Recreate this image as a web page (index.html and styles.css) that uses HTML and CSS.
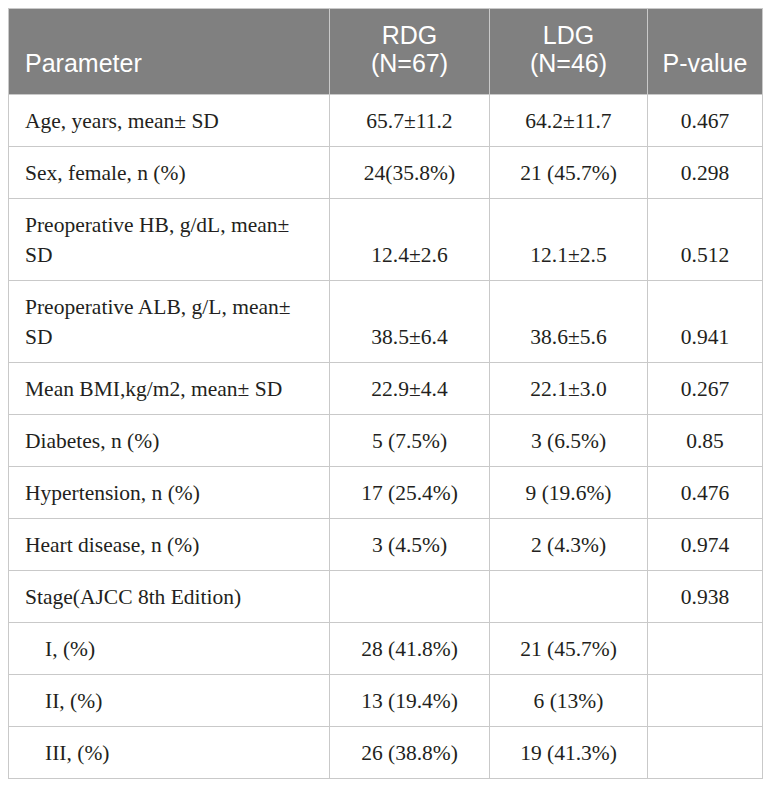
FILE: index.html
```html
<!DOCTYPE html>
<html lang="en">
<head>
    <meta charset="UTF-8">
    <meta name="viewport" content="width=device-width, initial-scale=1.0">
    <title>Baseline characteristics</title>
    <link rel="stylesheet" href="styles.css">
</head>
<body>
    <table class="data-table">
        <colgroup>
            <col class="col-param">
            <col class="col-rdg">
            <col class="col-ldg">
            <col class="col-p">
        </colgroup>
        <thead>
            <tr>
                <th class="param">Parameter</th>
                <th>RDG<br>(N=67)</th>
                <th>LDG<br>(N=46)</th>
                <th>P-value</th>
            </tr>
        </thead>
        <tbody>
            <tr>
                <td class="param">Age, years, mean± SD</td>
                <td>65.7±11.2</td>
                <td>64.2±11.7</td>
                <td>0.467</td>
            </tr>
            <tr>
                <td class="param">Sex, female, n (%)</td>
                <td>24(35.8%)</td>
                <td>21 (45.7%)</td>
                <td>0.298</td>
            </tr>
            <tr>
                <td class="param">Preoperative HB, g/dL, mean±<br>SD</td>
                <td>12.4±2.6</td>
                <td>12.1±2.5</td>
                <td>0.512</td>
            </tr>
            <tr>
                <td class="param">Preoperative ALB, g/L, mean±<br>SD</td>
                <td>38.5±6.4</td>
                <td>38.6±5.6</td>
                <td>0.941</td>
            </tr>
            <tr>
                <td class="param">Mean BMI,kg/m2, mean± SD</td>
                <td>22.9±4.4</td>
                <td>22.1±3.0</td>
                <td>0.267</td>
            </tr>
            <tr>
                <td class="param">Diabetes, n (%)</td>
                <td>5 (7.5%)</td>
                <td>3 (6.5%)</td>
                <td>0.85</td>
            </tr>
            <tr>
                <td class="param">Hypertension, n (%)</td>
                <td>17 (25.4%)</td>
                <td>9 (19.6%)</td>
                <td>0.476</td>
            </tr>
            <tr>
                <td class="param">Heart disease, n (%)</td>
                <td>3 (4.5%)</td>
                <td>2 (4.3%)</td>
                <td>0.974</td>
            </tr>
            <tr>
                <td class="param">Stage(AJCC 8th Edition)</td>
                <td></td>
                <td></td>
                <td>0.938</td>
            </tr>
            <tr>
                <td class="param sub">I, (%)</td>
                <td>28 (41.8%)</td>
                <td>21 (45.7%)</td>
                <td></td>
            </tr>
            <tr>
                <td class="param sub">II, (%)</td>
                <td>13 (19.4%)</td>
                <td>6 (13%)</td>
                <td></td>
            </tr>
            <tr>
                <td class="param sub">III, (%)</td>
                <td>26 (38.8%)</td>
                <td>19 (41.3%)</td>
                <td></td>
            </tr>
        </tbody>
    </table>
</body>
</html>
```
FILE: styles.css
```css
body {
    margin: 8px;
    background: #fff;
}
.data-table {
    width: 754px;
    border-collapse: collapse;
    table-layout: fixed;
    font-family: "Liberation Serif", "Times New Roman", serif;
    font-size: 21.5px;
    color: #231f20;
}
.col-param { width: 321px; }
.col-rdg { width: 160px; }
.col-ldg { width: 158px; }
.col-p { width: 115px; }
th, td {
    border: 1px solid #c9c9c9;
    text-align: center;
    vertical-align: bottom;
}
th {
    background-color: #808080;
    color: #fff;
    font-family: "Liberation Sans", Arial, sans-serif;
    font-weight: normal;
    font-size: 25px;
    line-height: 28px;
    height: 86px;
    padding: 0 8px 17px;
    box-sizing: border-box;
}
td {
    height: 51px;
    line-height: 30px;
    padding: 11px 8px 10px;
    box-sizing: border-box;
}
.param {
    text-align: left;
    padding-left: 16px;
}
.sub {
    padding-left: 36px;
}
```
